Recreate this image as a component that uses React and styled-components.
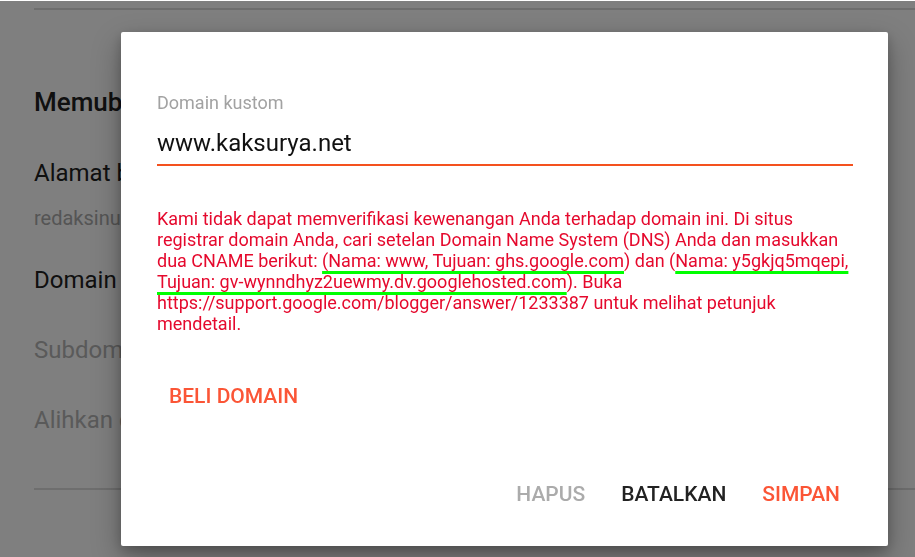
import React from "react";
import styled, { createGlobalStyle } from "styled-components";

const GlobalStyle = createGlobalStyle`
  html, body {
    margin: 0;
    padding: 0;
    height: 100%;
    overflow: hidden;
  }
  body {
    font-family: Roboto, "Noto Sans", "Liberation Sans", sans-serif;
    background: #fff;
    border-top: 1px solid #fff;
  }
`;

const Page = styled.div`
  height: 100vh;
  padding-left: 34px;
  box-sizing: border-box;
  background: #fff;
`;

const Divider = styled.div`
  height: 2px;
  background: #dcdcdc;
  margin-top: ${({ $top }) => $top}px;
`;

const Heading = styled.h2`
  margin: 76px 0 0;
  font-size: 26px;
  font-weight: 500;
  line-height: 32px;
  color: #212121;
`;

const SettingTitle = styled.div`
  margin-top: ${({ $top }) => $top}px;
  font-size: 24px;
  line-height: 30px;
  color: ${({ $muted }) => ($muted ? "#b4b4b4" : "#212121")};
`;

const SettingValue = styled.div`
  margin-top: 18px;
  font-size: 20px;
  line-height: 24px;
  color: #aaaaaa;
`;

const Overlay = styled.div`
  position: fixed;
  inset: 1px 0 0 0;
  background: rgba(0, 0, 0, 0.5);
`;

const Dialog = styled.div`
  position: fixed;
  left: 121px;
  top: 32px;
  width: 767px;
  height: 514px;
  box-sizing: border-box;
  padding: 60px 35px 0 36px;
  background: #fff;
  border-radius: 2px;
  box-shadow: 0 12px 30px rgba(0, 0, 0, 0.3), 0 4px 12px rgba(0, 0, 0, 0.2);
  display: flex;
  flex-direction: column;
`;

const Label = styled.label`
  font-size: 18px;
  line-height: 22px;
  color: #a2a2a2;
`;

const Input = styled.input`
  margin-top: 12px;
  padding: 0 0 4px;
  border: none;
  border-bottom: 2px solid #f4511e;
  outline: none;
  font-family: inherit;
  font-size: 24px;
  line-height: 30px;
  height: 34px;
  color: #111;
  background: transparent;
`;

const ErrorText = styled.p`
  margin: 42px 0 0;
  font-size: 18px;
  line-height: 21px;
  color: #e5092d;
`;

// green marker lines drawn over the screenshot
const Marked = styled.span`
  text-decoration: underline;
  text-decoration-color: #00ff00;
  text-decoration-thickness: 3px;
  text-decoration-skip-ink: none;
  text-underline-offset: 4px;
`;

const TextButton = styled.button`
  border: none;
  background: none;
  padding: 0 ${({ $pad }) => $pad}px;
  height: 36px;
  font-family: inherit;
  font-size: 21px;
  font-weight: 500;
  cursor: pointer;
  color: ${({ $tone }) =>
    $tone === "accent" ? "#fb5536" : $tone === "muted" ? "#ababab" : "#222222"};
`;

const BuyRow = styled.div`
  margin-top: 44px;
  display: flex;
`;

const Footer = styled.div`
  margin-top: auto;
  margin-bottom: 34px;
  margin-right: -5px;
  display: flex;
  justify-content: flex-end;
`;

export default function App() {
  return (
    <>
      <GlobalStyle />
      <Page>
        <Divider $top={7} />
        <Heading>Memublikasikan</Heading>
        <SettingTitle $top={40}>Alamat blog</SettingTitle>
        <SettingValue>redaksinusantara.blogspot.com</SettingValue>
        <SettingTitle $top={35}>Domain kustom</SettingTitle>
        <SettingTitle $top={40} $muted>Subdomain redirect</SettingTitle>
        <SettingTitle $top={40} $muted>Alihkan domain ke www</SettingTitle>
        <Divider $top={53} />
      </Page>
      <Overlay />
      <Dialog>
        <Label htmlFor="domain">Domain kustom</Label>
        <Input id="domain" defaultValue="www.kaksurya.net" />
        <ErrorText>
          Kami tidak dapat memverifikasi kewenangan Anda terhadap domain ini. Di
          situs registrar domain Anda, cari setelan Domain Name System (DNS) Anda
          dan masukkan dua CNAME berikut:{" "}
          <Marked>(Nama: www, Tujuan: ghs.google.com</Marked>) dan (
          <Marked>Nama: y5gkjq5mqepi,</Marked>{" "}
          <Marked>Tujuan: gv-wynndhyz2uewmy.dv.googlehosted.com</Marked>
          ). Buka https://support.google.com/blogger/answer/1233387 untuk melihat
          petunjuk mendetail.
        </ErrorText>
        <BuyRow>
          <TextButton $tone="accent" $pad={12}>BELI DOMAIN</TextButton>
        </BuyRow>
        <Footer>
          <TextButton $tone="muted" $pad={18}>HAPUS</TextButton>
          <TextButton $pad={18}>BATALKAN</TextButton>
          <TextButton $tone="accent" $pad={18}>SIMPAN</TextButton>
        </Footer>
      </Dialog>
    </>
  );
}
